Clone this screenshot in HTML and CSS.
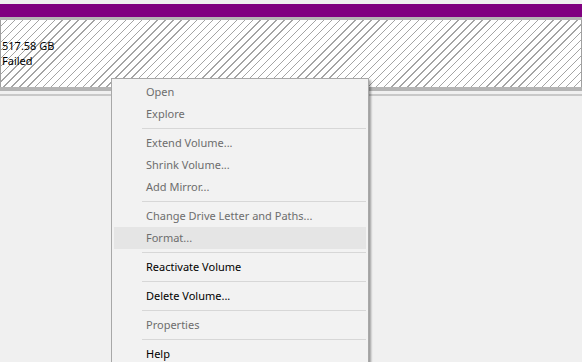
FILE: index.html
```html
<!DOCTYPE html>
<html>
<head>
<meta charset="utf-8">
<link rel="stylesheet" href="styles.css">
</head>
<body>
<div class="disk">
  <div class="topgap"></div>
  <div class="bar"></div>
  <div class="volume">
    <div class="hatch">
      <div class="size">517.58 GB</div>
      <div class="status">Failed</div>
    </div>
  </div>
  <div class="rule"></div>
</div>

<div class="menu">
  <div class="item dis">Open</div>
  <div class="item dis">Explore</div>
  <div class="sep"></div>
  <div class="item dis">Extend Volume...</div>
  <div class="item dis">Shrink Volume...</div>
  <div class="item dis">Add Mirror...</div>
  <div class="sep"></div>
  <div class="item dis">Change Drive Letter and Paths...</div>
  <div class="item dis hl">Format...</div>
  <div class="sep"></div>
  <div class="item">Reactivate Volume</div>
  <div class="sep"></div>
  <div class="item">Delete Volume...</div>
  <div class="sep"></div>
  <div class="item dis">Properties</div>
  <div class="sep"></div>
  <div class="item">Help</div>
</div>
</body>
</html>
```

FILE: styles.css
```css
html, body {
  margin: 0;
  padding: 0;
  background: #f0f0f0;
  width: 582px;
  height: 362px;
  overflow: hidden;
  font-family: "Noto Sans", "Open Sans", sans-serif;
  font-size: 11px;
}
.disk {
  display: flex;
  flex-direction: column;
}
.topgap {
  height: 4px;
  background: #f0f0f0;
}
.bar {
  height: 13px;
  background: #800080;
}
.volume {
  border-top: 3px solid #b4b4b4;
  border-bottom: 4px solid #b4b4b4;
}
.hatch {
  height: 67px;
  border-left: 1px solid #a0a0a0;
  border-right: 1px solid #a0a0a0;
  background-color: #ffffff;
  background-image: repeating-linear-gradient(-45deg, #ffffff 0px, #ffffff 4.6px, #a4a4a4 4.6px, #a4a4a4 5.6px);
  padding: 18px 0 0 1px;
  box-sizing: border-box;
  color: #000;
  line-height: 15px;
}
.rule {
  margin-top: 3px;
  height: 2px;
  background: #c8c8c8;
}
.menu {
  position: absolute;
  left: 111px;
  top: 78px;
  width: 252px;
  padding: 2px 2px 0 2px;
  background: #f2f2f2;
  border: 1px solid #a8a8a8;
  box-shadow: 2px 2px 2px rgba(0,0,0,0.35);
  height: 290px;
  box-sizing: content-box;
}
.item {
  height: 22px;
  line-height: 22px;
  padding-left: 32px;
  color: #000;
  white-space: nowrap;
}
.item.dis {
  color: #6d6d6d;
}
.item.hl {
  background: #e5e5e5;
}
.sep {
  height: 1px;
  margin: 3px 0 3px 28px;
  background: #d7d7d7;
}
```
